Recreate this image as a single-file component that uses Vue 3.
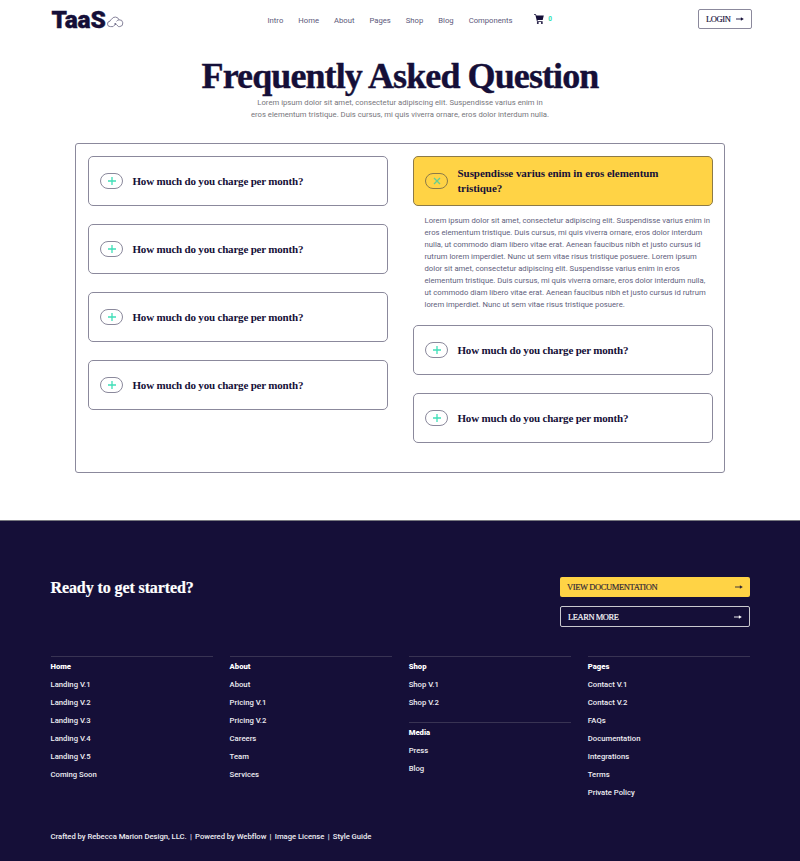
<script setup>
const nav = ['Intro', 'Home', 'About', 'Pages', 'Shop', 'Blog', 'Components']
const question = 'How much do you charge per month?'
const left = [question, question, question, question]
const right = [question, question]
const answer = [
  'Lorem ipsum dolor sit amet, consectetur adipiscing elit. Suspendisse varius enim in',
  'eros elementum tristique. Duis cursus, mi quis viverra ornare, eros dolor interdum',
  'nulla, ut commodo diam libero vitae erat. Aenean faucibus nibh et justo cursus id',
  'rutrum lorem imperdiet. Nunc ut sem vitae risus tristique posuere. Lorem ipsum',
  'dolor sit amet, consectetur adipiscing elit. Suspendisse varius enim in eros',
  'elementum tristique. Duis cursus, mi quis viverra ornare, eros dolor interdum nulla,',
  'ut commodo diam libero vitae erat. Aenean faucibus nibh et justo cursus id rutrum',
  'lorem imperdiet. Nunc ut sem vitae risus tristique posuere.'
]
const columns = [
  [{ title: 'Home', links: ['Landing V.1', 'Landing V.2', 'Landing V.3', 'Landing V.4', 'Landing V.5', 'Coming Soon'] }],
  [{ title: 'About', links: ['About', 'Pricing V.1', 'Pricing V.2', 'Careers', 'Team', 'Services'] }],
  [
    { title: 'Shop', links: ['Shop V.1', 'Shop V.2'] },
    { title: 'Media', links: ['Press', 'Blog'] }
  ],
  [{ title: 'Pages', links: ['Contact V.1', 'Contact V.2', 'FAQs', 'Documentation', 'Integrations', 'Terms', 'Private Policy'] }]
]
</script>

<template>
  <div class="page">
    <header class="header">
      <a class="logo">
        <span class="logo-text">TaaS</span>
        <svg class="cloud" viewBox="0 0 17 12" width="17" height="12">
          <path d="M6.2 10.6H3.4A2.7 2.7 0 0 1 3 5.2A2.3 2.3 0 0 1 4.6 3.3A4 4 0 0 1 12 3.8A3.4 3.4 0 0 1 12.8 10.6H11.4L9.4 8.4M12 3.8C10.9 3.9 10 4.6 9.6 5.4M6.4 10.4L8 8.6" />
          <circle cx="8.3" cy="7.9" r="1" />
        </svg>
      </a>
      <nav class="nav">
        <a v-for="n in nav" :key="n">{{ n }}</a>
      </nav>
      <a class="cart">
        <svg viewBox="0 0 10 10" width="10" height="10">
          <path d="M0 .2H1.9L2.4 1.5H9.8L8.7 6H3.5L3.7 6.9H8.6V7.7H3L1.4 1H0Z" />
          <circle cx="3.8" cy="8.9" r="1" />
          <circle cx="7.9" cy="8.9" r="1" />
        </svg>
        <span>0</span>
      </a>
      <a class="login">
        <span>LOGIN</span>
        <svg class="arrow" viewBox="0 0 8 6" width="8" height="6"><path class="shaft" d="M0 3H6" /><path d="M4.9 1.2L7.8 3L4.9 4.8Z" /></svg>
      </a>
    </header>

    <main>
      <h1>Frequently Asked Question</h1>
      <p class="intro">Lorem ipsum dolor sit amet, consectetur adipiscing elit. Suspendisse varius enim in<br>eros elementum tristique. Duis cursus, mi quis viverra ornare, eros dolor interdum nulla.</p>

      <section class="faq">
        <div class="faq-col">
          <div v-for="(q, i) in left" :key="i" class="card">
            <span class="pill"><svg viewBox="0 0 8 8" width="8" height="8"><path d="M4 0V8M0 4H8" /></svg></span>
            <h2>{{ q }}</h2>
          </div>
        </div>
        <div class="faq-col">
          <div class="card open">
            <span class="pill"><svg viewBox="0 0 8 8" width="8" height="8"><path d="M1 1L7 7M7 1L1 7" /></svg></span>
            <h2>Suspendisse varius enim in eros elementum<br>tristique?</h2>
          </div>
          <p class="answer"><span v-for="line in answer" :key="line">{{ line }}</span></p>
          <div v-for="(q, i) in right" :key="i" class="card">
            <span class="pill"><svg viewBox="0 0 8 8" width="8" height="8"><path d="M4 0V8M0 4H8" /></svg></span>
            <h2>{{ q }}</h2>
          </div>
        </div>
      </section>
    </main>

    <footer class="footer">
      <div class="cta">
        <h3>Ready to get started?</h3>
        <div class="buttons">
          <a class="button solid">
            <span>VIEW DOCUMENTATION</span>
            <svg class="arrow" viewBox="0 0 8 6" width="8" height="6"><path class="shaft" d="M0 3H6" /><path d="M4.9 1.2L7.8 3L4.9 4.8Z" /></svg>
          </a>
          <a class="button outline">
            <span>LEARN MORE</span>
            <svg class="arrow" viewBox="0 0 8 6" width="8" height="6"><path class="shaft" d="M0 3H6" /><path d="M4.9 1.2L7.8 3L4.9 4.8Z" /></svg>
          </a>
        </div>
      </div>
      <div class="columns">
        <div v-for="(col, i) in columns" :key="i" class="column">
          <div v-for="group in col" :key="group.title" class="group">
            <strong>{{ group.title }}</strong>
            <a v-for="link in group.links" :key="link">{{ link }}</a>
          </div>
        </div>
      </div>
      <div class="legal">
        <span>Crafted by Rebecca Marion Design, LLC.</span><i>|</i><span>Powered by Webflow</span><i>|</i><span>Image License</span><i>|</i><span>Style Guide</span>
      </div>
    </footer>
  </div>
</template>

<style>
body { margin: 0; background: #fff; }
</style>

<style scoped>
.page {
  width: 800px;
  height: 861px;
  display: flex;
  flex-direction: column;
  overflow: hidden;
  box-sizing: border-box;
  color: #150f38;
  font: 400 7.7px/12px Roboto, "Liberation Sans", sans-serif;
}
h1, h2, h3, p { margin: 0; }
h1, h2, h3, .login, .button { font-family: "Liberation Serif", serif; }

.header { display: flex; height: 40px; padding-left: 51.5px; box-sizing: border-box; }
.logo { display: flex; flex: none; width: 216px; }
.logo-text { font-weight: 900; font-size: 24.5px; line-height: 39px; letter-spacing: -.2px; -webkit-text-stroke: .4px; }
.cloud { margin: 15.5px 0 0 1.5px; fill: none; stroke: #77748e; stroke-width: .9; }
.cloud circle { fill: #6f6c88; stroke: none; }
.nav { display: flex; flex: none; gap: 15px; line-height: 41px; color: #5b587a; }
.cart { display: flex; flex: none; box-sizing: border-box; gap: 4.8px; padding-left: 21px; line-height: 38px; font-size: 6.5px; font-weight: 700; color: #2ee0b4; }
.cart svg { margin-top: 14px; fill: #150f38; }
.login {
  display: flex;
  align-items: center;
  justify-content: space-between;
  box-sizing: border-box;
  flex: none;
  width: 54px;
  height: 20px;
  margin: 9px 48px 0 auto;
  padding: 0 7px;
  border: 1px solid #8b899c;
  border-radius: 2px;
  font-size: 8.5px;
  letter-spacing: -.4px;
  -webkit-text-stroke: .15px;
}
.arrow { flex: none; fill: currentColor; }
.arrow .shaft { fill: none; stroke: currentColor; stroke-width: .9; }

main { display: flex; flex-direction: column; align-items: center; height: 480px; }
h1 { margin-top: 15px; font-size: 36px; line-height: 42px; letter-spacing: -.9px; white-space: nowrap; -webkit-text-stroke: .4px; }
.intro { color: #77767c; text-align: center; letter-spacing: .015px; white-space: nowrap; }

.faq {
  display: flex;
  gap: 25px;
  box-sizing: border-box;
  width: 650px;
  height: 330px;
  margin-top: 22px;
  padding: 12px 11px 0 12px;
  border: 1px solid #8b899c;
  border-radius: 3px;
}
.faq-col { display: flex; flex-direction: column; gap: 18px; width: 300px; }
.card {
  display: flex;
  align-items: center;
  gap: 9.5px;
  box-sizing: border-box;
  width: 300px;
  height: 50px;
  padding-left: 11px;
  border: 1px solid #8b899c;
  border-radius: 5px;
}
.card h2 { font-size: 11px; line-height: 15px; letter-spacing: -.19px; white-space: nowrap; }
.open { background: #ffd345; border-color: #8c7a48; }
.card.open h2 { letter-spacing: -.05px; }
.pill {
  display: flex;
  align-items: center;
  justify-content: center;
  box-sizing: border-box;
  width: 23px;
  height: 16px;
  border: 1px solid #8b899c;
  border-radius: 8px;
}
.open .pill { border-color: #8c7a48; }
.pill svg { fill: none; stroke: #3fdfb8; stroke-width: 1.3; }
.open .pill svg { stroke: #62cf94; }
.answer { display: flex; flex-direction: column; margin: -9.5px 0 -3.5px; padding-left: 11.5px; color: #615e7c; letter-spacing: .015px; white-space: nowrap; }

.footer {
  flex: 1;
  display: flex;
  flex-direction: column;
  box-sizing: border-box;
  padding: 56px 50px 0 50.5px;
  border-top: 1px solid #77787f;
  background: #150f38;
  color: #fff;
}
.cta { display: flex; justify-content: space-between; height: 79px; }
.cta h3 { font-size: 16px; line-height: 22px; letter-spacing: -.1px; -webkit-text-stroke: .2px; }
.buttons { display: flex; flex-direction: column; gap: 9px; }
.button {
  display: flex;
  align-items: center;
  justify-content: space-between;
  box-sizing: border-box;
  width: 190px;
  padding: 0 7px;
  border-radius: 2px;
  font-size: 8.5px;
  -webkit-text-stroke: .15px;
}
.solid { height: 20px; background: #ffd345; color: #2c2538; letter-spacing: -.38px; }
.outline { height: 21px; border: 1px solid #c9c9cf; letter-spacing: -.45px; }

.columns { display: flex; gap: 17px; height: 174.5px; font-weight: 500; color: #eeedf2; }
.column { display: flex; flex-direction: column; gap: 10px; width: 162.1px; }
.group { display: flex; flex-direction: column; padding-top: 1px; border-top: 1px solid #383353; line-height: 18px; }
.group strong { font-weight: 900; color: #fff; }
.legal { display: flex; font-weight: 500; color: #eeedf2; letter-spacing: -.035px; }
.legal i { margin: 0 3.3px; font-style: normal; }
</style>
